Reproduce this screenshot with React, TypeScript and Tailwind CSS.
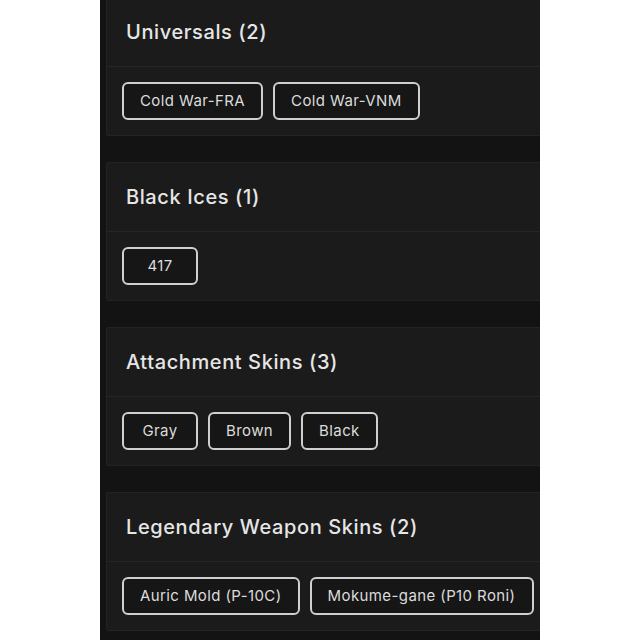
import React from 'react';

interface Group {
  title: string;
  items: string[];
}

const groups: Group[] = [
  { title: 'Universals (2)', items: ['Cold War-FRA', 'Cold War-VNM'] },
  { title: 'Black Ices (1)', items: ['417'] },
  { title: 'Attachment Skins (3)', items: ['Gray', 'Brown', 'Black'] },
  { title: 'Legendary Weapon Skins (2)', items: ['Auric Mold (P-10C)', 'Mokume-gane (P10 Roni)'] },
];

const App = () => {
  return (
    <div className="w-[640px] h-[640px] bg-white flex overflow-hidden" style={{ fontFamily: 'Inter, "Noto Sans", sans-serif' }}>
      <div className="ml-[100px] w-[440px] h-full bg-[#131313] overflow-hidden pl-[6px]">
        <div className="w-[460px] flex flex-col gap-[26px] -mt-[3px]">
          {groups.map((group) => (
            <section key={group.title} className="bg-[#1b1b1b] border border-[#232323] rounded-[2px]">
              <div className="h-[69px] flex items-center px-[19px] border-b border-[#262626]">
                <h2 className="text-[20px] font-medium text-[#e6e6e6] tracking-[0.6px]">{group.title}</h2>
              </div>
              <div className="h-[68px] flex items-center gap-[10px] px-[15px]">
                {group.items.map((item) => (
                  <span
                    key={item}
                    className="h-[38px] min-w-[76px] px-[16px] flex items-center justify-center rounded-[6px] border-2 border-[#cfcfcf] bg-[#161616] text-[15px] text-[#dcdcdc] tracking-[0.4px] whitespace-nowrap"
                  >
                    {item}
                  </span>
                ))}
              </div>
            </section>
          ))}
        </div>
      </div>
    </div>
  );
};

export default App;
